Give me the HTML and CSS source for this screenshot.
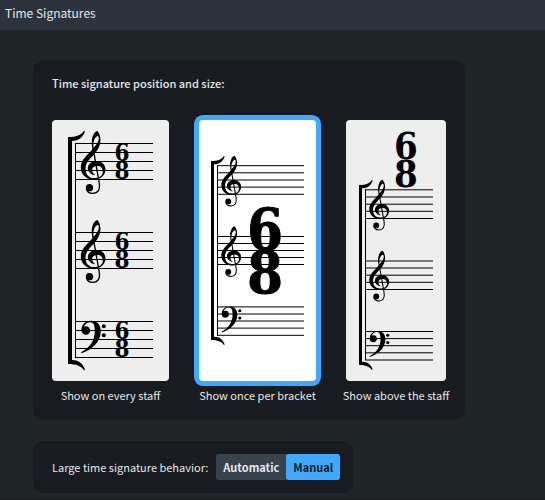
FILE: index.html
```html
<!DOCTYPE html>
<html lang="en">
  <head>
    <meta charset="UTF-8" />
    <meta name="viewport" content="width=device-width, initial-scale=1.0" />
    <title>Time Signatures</title>
    <link rel="stylesheet" href="styles.css">
  </head>
  <body>
    <!-- shared music symbols, 26.75 units = one staff space, origin on the top line -->
    <svg class="symbols" aria-hidden="true">
      <defs>
        <g id="treble" transform="translate(-91 -86)">
          <path fill-rule="evenodd" d="M156 48C162 52 166 64 166 75C166 92 157 107 146 119C132 133 121 144 121 161C121 178 131 189 147 189C164 189 173 181 173 170C173 159 167 153 157 153C147 153 141 157 141 164C141 171 144 176 149 179L148 181C136 178 128 170 128 160C128 147 140 138 154 138C170 138 181 149 181 163C181 181 166 194 146 194C122 194 107 178 107 157C107 140 119 127 131 115L142 103C140 92 139 84 140 76C142 61 148 50 156 48ZM145 98C153 90 161 80 161 71C161 66 160 63 157 63C150 65 143 78 145 98Z" />
          <path class="stem" d="M144 101L162 202C166 225 158 235 143 235C132 235 125 229 124 220" />
          <circle cx="133" cy="218" r="11" />
        </g>
        <g id="bass" transform="translate(-91 -214)">
          <path d="M109 240C108 224 121 212 138 212C156 212 167 224 167 243C167 275 140 299 109 309L108 306C134 293 149 272 149 242C149 226 146 216 135 216C124 216 114 226 115 238Z" />
          <circle cx="122" cy="241" r="13" />
          <circle cx="176" cy="228" r="6" />
          <circle cx="176" cy="255" r="6" />
        </g>
        <path id="tip" d="M0 0C24 0 40 -6 48 -19L51 -17C45 2 31 12 12 12L0 14Z" />
      </defs>
    </svg>

    <header class="header">
      <h1>Time Signatures</h1>
    </header>

    <main class="content">
      <fieldset class="panel position">
        <legend class="panel-title">Time signature position and size:</legend>
        <div class="options">
          <label class="option">
            <input type="radio" name="position" value="staff" />
            <svg class="preview" width="117" height="261" viewBox="0 0 117 261">
              <path class="line" d="M23.5 23v215M23 23.5h78M23 32.5h78M23 41.5h78M23 50.5h78M23 59.5h78M23 112.5h78M23 121.5h78M23 130.5h78M23 139.5h78M23 148.5h78M23 201.5h78M23 210.5h78M23 219.5h78M23 228.5h78M23 237.5h78" />
              <rect x="16" y="18" width="4" height="225" />
              <use href="#tip" transform="translate(16 17) scale(.333)" />
              <use href="#tip" transform="translate(16 244) scale(.333 -.333)" />
              <use href="#treble" transform="translate(23.5 23.7) scale(.333)" />
              <use href="#treble" transform="translate(23.5 112.7) scale(.333)" />
              <use href="#bass" transform="translate(23.5 201.5) scale(.333)" />
              <g class="meter small">
                <text><tspan x="70" y="41">6</tspan><tspan x="70" y="59">8</tspan></text>
                <text><tspan x="70" y="130">6</tspan><tspan x="70" y="148">8</tspan></text>
                <text><tspan x="70" y="219">6</tspan><tspan x="70" y="237">8</tspan></text>
              </g>
            </svg>
            <span>Show on every staff</span>
          </label>

          <label class="option">
            <input type="radio" name="position" value="bracket" checked />
            <svg class="preview" width="117" height="261" viewBox="0 0 117 261">
              <path class="line" d="M18.5 45v171M18 45.7h87M18 52.8h87M18 60h87M18 67.1h87M18 74.3h87M18 116.5h87M18 123.5h87M18 130.5h87M18 137.5h87M18 144.5h87M18 186.9h87M18 194h87M18 201h87M18 208.1h87M18 215.3h87" />
              <rect x="12" y="42" width="3" height="177" />
              <use href="#tip" transform="translate(12 41) scale(.268)" />
              <use href="#tip" transform="translate(12 220) scale(.268 -.268)" />
              <use href="#treble" transform="translate(18 46) scale(.268)" />
              <use href="#treble" transform="translate(18 116.5) scale(.268)" />
              <use href="#bass" transform="translate(18 187) scale(.268)" />
              <g class="meter large">
                <text><tspan x="66" y="130">6</tspan><tspan x="66" y="173">8</tspan></text>
              </g>
            </svg>
            <span>Show once per bracket</span>
          </label>

          <label class="option">
            <input type="radio" name="position" value="above" />
            <svg class="preview" width="100" height="261" viewBox="0 0 100 261">
              <path class="line" d="M19.5 69v171M19 69.8h68M19 77h68M19 84.2h68M19 91.3h68M19 98.5h68M19 141h68M19 148h68M19 155.2h68M19 162.3h68M19 169.5h68M19 211.5h68M19 218.6h68M19 225.7h68M19 232.8h68M19 240h68" />
              <rect x="13" y="66" width="3" height="178" />
              <use href="#tip" transform="translate(13 65) scale(.268)" />
              <use href="#tip" transform="translate(13 245) scale(.268 -.268)" />
              <use href="#treble" transform="translate(19 70) scale(.268)" />
              <use href="#treble" transform="translate(19 141) scale(.268)" />
              <use href="#bass" transform="translate(19 211.5) scale(.268)" />
              <g class="meter medium">
                <text><tspan x="60" y="39">6</tspan><tspan x="60" y="67">8</tspan></text>
              </g>
            </svg>
            <span>Show above the staff</span>
          </label>
        </div>
      </fieldset>

      <div class="panel behavior" role="group" aria-labelledby="behaviorLabel">
        <span id="behaviorLabel">Large time signature behavior:</span>
        <div class="toggle">
          <button type="button" aria-pressed="false">Automatic</button>
          <button type="button" class="active" aria-pressed="true">Manual</button>
        </div>
      </div>
    </main>
  </body>
</html>
```
FILE: styles.css
```css
* {
  box-sizing: border-box;
}
body {
  margin: 0;
  min-height: 100vh;
  background-color: #202528;
  border-bottom: 1px solid #181b1f;
  color: #e4e7ea;
  font-family: "Noto Sans CJK SC", "Noto Sans", sans-serif;
  font-size: 11px;
  line-height: 18px;
}
.symbols {
  position: absolute;
  width: 0;
  height: 0;
}
.header {
  height: 30px;
  padding: 3px 5px;
  background-color: #2d333c;
}
.header h1 {
  margin: 0;
  font-size: 12px;
  font-weight: 400;
  line-height: 20px;
}
.content {
  display: flex;
  flex-direction: column;
  align-items: flex-start;
  gap: 21px;
  padding: 30px 33px 6px;
}
.panel {
  margin: 0;
  border: none;
  border-radius: 10px;
  background-color: #181b1f;
}
.position {
  padding: 14px 19px 16px;
}
.panel-title {
  float: left;
  padding: 0;
  font-weight: 500;
}
.options {
  clear: both;
  display: flex;
  gap: 30px;
  padding-top: 28px;
}
.option {
  display: flex;
  flex-direction: column;
  align-items: center;
  gap: 5px;
  cursor: pointer;
}
/* captions may be wider than their preview */
.option span {
  margin: 0 -10px;
  white-space: nowrap;
}
.option input {
  position: absolute;
  opacity: 0;
}
.preview {
  display: block;
  border-radius: 4px;
  background-color: #eeeeee;
}
.option input:checked + .preview {
  background-color: white;
  box-shadow: 0 0 0 5px #40a9ff;
}
.line {
  fill: none;
  stroke: black;
  stroke-width: 1;
}
.stem {
  fill: none;
  stroke: black;
  stroke-width: 4;
}
.meter {
  font-family: "DejaVu Serif Condensed", "DejaVu Serif", serif;
  font-weight: 700;
  text-anchor: middle;
}
.small {
  font-size: 24px;
}
.medium {
  font-size: 38px;
}
.large {
  font-size: 57px;
  stroke: black;
  stroke-width: 1;
}
.behavior {
  display: flex;
  align-items: center;
  gap: 8px;
  padding: 13px 13px 13px 19px;
}
.toggle {
  display: flex;
  border-radius: 3px;
  background-color: #38424e;
}
.toggle button {
  height: 26px;
  padding: 0 7px;
  border: none;
  border-radius: 3px;
  background-color: transparent;
  color: #e4e7ea;
  font: inherit;
  font-weight: 700;
}
.toggle .active {
  background-color: #40a9ff;
  color: #10151b;
}
```
